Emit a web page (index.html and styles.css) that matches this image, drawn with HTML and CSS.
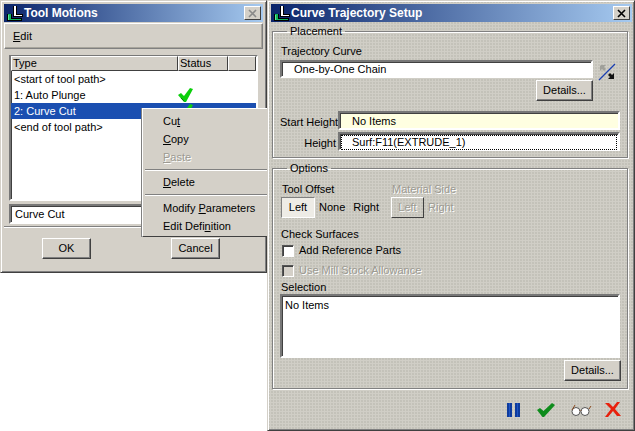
FILE: index.html
```html
<!DOCTYPE html>
<html lang="en">
<head>
<meta charset="utf-8">
<title>Tool Motions</title>
<link rel="stylesheet" href="styles.css">
</head>
<body>
<svg class="defs" width="0" height="0" aria-hidden="true">
  <symbol id="logo" viewBox="0 0 16 15">
    <path d="M0 8h5v4h10v3H0z" fill="#000"/>
    <path d="M1 8h3v5h10v1H1z" fill="#12b45c"/>
    <path d="M1 9h1v5H1z" fill="#5fe89a"/>
    <path d="M6 0h4v8h6v3H6z" fill="#000"/>
    <path d="M7 0h2v9h6v1H7z" fill="#fff"/>
  </symbol>
</svg>

<section class="window left-window">
  <header class="titlebar">
    <svg class="logo"><use href="#logo"/></svg>
    <span class="title">Tool Motions</span>
    <span class="close close-off"><svg viewBox="0 0 9 9"><path d="M1 1l7 7M8 1L1 8" stroke="#8a8a8a" stroke-width="1.6"/></svg></span>
  </header>
  <nav class="menubar"><span><u>E</u>dit</span></nav>
  <div class="left-body">
    <div class="list sunken">
      <div class="list-head">
        <span class="hcell h-type">Type</span><span class="hcell h-status">Status</span><span class="hcell h-blank"></span>
      </div>
      <div class="row"><span class="cell-type">&lt;start of tool path&gt;</span></div>
      <div class="row"><span class="cell-type">1: Auto Plunge</span>
        <svg class="tick" viewBox="0 0 15 14"><path d="M0 7l3-2 3 3 6-8 3 1-7 13H6z" fill="#0ccf0c"/><path d="M3 10l3 3" stroke="#087c08" fill="none"/></svg></div>
      <div class="row selected"><span class="cell-type">2: Curve Cut</span>
        <svg class="tick" viewBox="0 0 15 14"><path d="M0 7l3-2 3 3 6-8 3 1-7 13H6z" fill="#0ccf0c"/></svg></div>
      <div class="row"><span class="cell-type">&lt;end of tool path&gt;</span></div>
    </div>
    <div class="name-field sunken">Curve Cut</div>
  </div>
  <div class="left-foot">
    <button class="btn foot-btn">OK</button>
    <button class="btn foot-btn">Cancel</button>
  </div>
</section>

<div class="context-menu">
  <div class="mi">Cu<u>t</u></div>
  <div class="mi"><u>C</u>opy</div>
  <div class="mi disabled"><u>P</u>aste</div>
  <hr class="msep">
  <div class="mi"><u>D</u>elete</div>
  <hr class="msep msep-b">
  <div class="mi">Modify <u>P</u>arameters</div>
  <div class="mi">Edit Defi<u>n</u>ition</div>
</div>

<section class="window right-window">
  <header class="titlebar">
    <svg class="logo"><use href="#logo"/></svg>
    <span class="title">Curve Trajectory Setup</span>
    <span class="close"><svg viewBox="0 0 9 9"><path d="M1 1l7 7M8 1L1 8" stroke="#000" stroke-width="1.6"/></svg></span>
  </header>
  <div class="right-body">
    <fieldset class="group placement">
      <legend>Placement</legend>
      <div class="label traj-label">Trajectory Curve</div>
      <div class="traj-row">
        <div class="field traj-field sunken">One-by-One Chain</div>
        <svg class="flip" viewBox="0 0 18 18">
          <path d="M3 2h5L6 4l2 2-2 2-2-2-2 2V3z" fill="#a0a09a"/>
          <path d="M17 1L1 17" stroke="#1a3fb0" stroke-width="1.3"/>
          <path d="M16 16h-6l2-2-2-2 2-2 2 2 2-2z" fill="#111"/>
        </svg>
      </div>
      <div class="details-row traj-details"><button class="btn details">Details...</button></div>
      <div class="ref-grid">
        <span class="ref-label">Start Height</span><div class="field ref-field yellow sunken">No Items</div>
        <span class="ref-label">Height</span><div class="field ref-field sunken"><span class="focus">Surf:F11(EXTRUDE_1)</span></div>
      </div>
    </fieldset>
    <fieldset class="group options">
      <legend>Options</legend>
      <div class="seg-row">
        <div class="seg-block">
          <div class="label">Tool Offset</div>
          <div class="seg">
            <span class="seg-on">Left</span><span class="seg-none">None</span><span class="seg-right">Right</span>
          </div>
        </div>
        <div class="seg-block material">
          <div class="label disabled">Material Side</div>
          <div class="seg">
            <span class="seg-raised disabled">Left</span><span class="seg-right2 disabled">Right</span>
          </div>
        </div>
      </div>
      <div class="label check-title">Check Surfaces</div>
      <label class="check"><span class="box"></span>Add Reference Parts</label>
      <label class="check disabled"><span class="box box-off"></span>Use Mill Stock Allowance</label>
      <div class="label sel-label">Selection</div>
      <div class="sel-box sunken">No Items</div>
      <div class="details-row sel-details"><button class="btn details">Details...</button></div>
    </fieldset>
    <div class="actions">
      <svg class="a-pause" viewBox="0 0 13 14"><path d="M0 0h5v14H0zM8 0h5v14H8z" fill="#0f3c9e"/><path d="M2 0h1v14H2zM10 0h1v14h-1z" fill="#1f55c4"/></svg>
      <svg class="a-ok" viewBox="0 0 18 14"><path d="M0 7l3-2 3.500 3L15 0l3 2L7 14h-1.500z" fill="#0e8c1c"/></svg>
      <svg class="a-glass" viewBox="0 0 21 12"><circle cx="5" cy="7.500" r="4" fill="#fff" stroke="#555"/><circle cx="14" cy="7.500" r="4" fill="#fff" stroke="#555"/><path d="M9 6.500q.5-1 1 0M1 6L4 1M18 5l2-3" stroke="#8a4a20" fill="none"/></svg>
      <svg class="a-x" viewBox="0 0 16 15"><path d="M0 1h4l4 4 4-5h3l-5 7 6 7h-4l-4-5-5 6H0l6-8z" fill="#e8200c"/></svg>
    </div>
  </div>
</section>
</body>
</html>
```

FILE: styles.css
```css
* { box-sizing: border-box; }
html, body { margin: 0; padding: 0; }
body {
  width: 635px; height: 431px; overflow: hidden; position: relative;
  background: #fff;
  font: 11px/13px "Liberation Sans", sans-serif;
  color: #000;
}
.defs { position: absolute; }
u { text-decoration: underline; }
.disabled { color: #9c9a92; text-shadow: 1px 1px 0 #fff; }

.window {
  position: absolute; top: 0;
  display: flex; flex-direction: column;
  background: #d4d0c8;
  border: 1px solid;
  border-color: #d4d0c8 #404040 #404040 #d4d0c8;
  box-shadow: inset 1px 1px 0 #fff, inset -1px -1px 0 #808080;
  padding: 3px;
}
.left-window { left: 0; width: 267px; height: 273px; }
.right-window { left: 267px; width: 368px; height: 431px; padding: 3px 2px 3px 3px;
  background-color: #d0cec6;
  background-image: radial-gradient(circle at 1px 1px, #bdbbb2 .6px, transparent .9px);
  background-size: 3px 3px; }

.titlebar {
  height: 18px; flex: none; display: flex; align-items: center;
  background: linear-gradient(90deg, #0a246a, #a6caf0);
  color: #fff; padding: 0 2px 0 3px;
}
.logo { width: 16px; height: 15px; flex: none; }
.title { margin-left: 1px; font: bold 12px/16px "Liberation Sans", sans-serif; }
.close {
  margin-left: auto; width: 17px; height: 14px;
  background: #d4d0c8;
  border: 1px solid; border-color: #fff #404040 #404040 #fff;
  display: flex; align-items: center; justify-content: center;
}
.close svg { width: 9px; height: 9px; }

.menubar {
  height: 26px; flex: none; margin-top: 1px;
  border: 1px solid; border-color: #fff #808080 #808080 #fff;
  box-shadow: inset -1px -1px 0 #a8a59c;
  padding: 6px 8px; 
}

.sunken {
  border: 2px solid;
  border-color: #777 #fff #fff #777;
  box-shadow: inset 1px 1px 0 #404040;
}
.left-body { padding: 6px 5px 0; flex: none; }
.list { height: 146px; background: #fff; padding: 0; }
.list-head { display: flex; height: 15px; margin-top: -1px; }
.hcell {
  background: #d4d0c8; border: 1px solid; border-color: #fff #404040 #404040 #fff;
  padding: 0 1px; line-height: 13px;
}
.h-type { width: 167px; }
.h-status { width: 50px; }
.h-blank { flex: 1; }
.row { height: 16px; display: flex; align-items: center; position: relative; padding-left: 3px; }
.selected {
  background-color: #2b62c4; color: #fff;
  background-image: radial-gradient(circle at 1px 1px, #1a4fb0 .7px, transparent 1px);
  background-size: 2px 2px;
}
.tick { position: absolute; left: 167px; top: 1px; width: 15px; height: 14px; }
.name-field { height: 20px; margin-top: 3px; background: #fff; padding: 2px 4px; }

.left-foot {
  flex: 1; margin: 2px 0 0; border-top: 1px solid #808080;
  box-shadow: inset 0 1px 0 #fff;
  display: flex; padding: 11px 38px 0 38px; justify-content: space-between; margin-right: 5px; align-items: flex-start;
}
.btn {
  font: inherit; color: #000; background: #d4d0c8; padding: 0;
  border: 1px solid; border-color: #fff #404040 #404040 #fff;
  box-shadow: inset -1px -1px 0 #808080;
}
.foot-btn { width: 49px; height: 21px; }

.context-menu {
  position: absolute; left: 142px; top: 108px; width: 140px; height: 129px;
  background: #d4d0c8; padding: 3px 0;
  border: 1px solid; border-color: #fff #404040 #404040 #fff;
  box-shadow: -1px 0 0 #808080;
  display: flex; flex-direction: column;
}
.mi { height: 18px; line-height: 18px; padding-left: 20px; flex: none; }
.msep { margin: 3px 2px 2px; flex: none; height: 2px; border: 0; border-top: 1px solid #808080; border-bottom: 1px solid #fff; width: 123px; }
.msep-b { margin-bottom: 3px; }

.right-body { flex: 1; display: flex; flex-direction: column; padding: 3px 4px 0 1px; }
.group {
  margin: 0; padding: 0 7px; min-width: 0;
  border: 1px solid #808080;
  box-shadow: 1px 1px 0 #fff, inset 1px 1px 0 #fff;
}
.group legend { margin-left: 7px; padding: 0 3px; line-height: 13px; }
.placement { height: 133px; flex: none; }
.options { height: 227px; margin-top: 4px; flex: none; }
.label { line-height: 13px; white-space: nowrap; }
.traj-label { margin-top: 7px; padding-left: 1px; }
.traj-row { display: flex; align-items: flex-start; margin-top: 2px; height: 18px; }
.field { background: #fff; line-height: 13px; }
.traj-field { width: 313px; height: 18px; padding: 1px 12px; }
.flip { width: 18px; height: 18px; margin: 3px 0 0 5px; flex: none; }
.details-row { display: flex; justify-content: flex-end; }
.traj-details { width: 313px; margin-top: 2px; }
.details { width: 57px; height: 21px; }
.ref-grid { display: grid; grid-template-columns: 56px 282px; column-gap: 2px; row-gap: 2px; margin-top: 10px; }
.ref-label { text-align: right; align-self: end; padding-bottom: 1px; white-space: nowrap; }
.ref-field { height: 19px; padding: 2px 12px; }
.ref-field:last-child { padding: 1px; }
.yellow { background: #ffffe1; }
.focus { display: block; border: 1px dotted #000; padding: 0 10px; line-height: 13px; width: 100%; height: 15px; }

.seg-row { display: flex; margin-top: 8px; padding-left: 1px; }
.seg-block { width: 110px; padding-left: 1px; }
.seg { display: flex; align-items: center; margin-top: 1px; height: 21px; margin-left: -1px; }
.seg-on {
  width: 34px; height: 21px; flex: none; text-align: center; line-height: 19px;
  border: 1px solid; border-color: #808080 #fff #fff #808080;
  background: #eeece6;
}
.seg-none { margin-left: 4px; }
.seg-right { margin-left: 8px; }
.seg-raised {
  width: 33px; height: 21px; flex: none; text-align: center; line-height: 19px;
  border: 1px solid; border-color: #fff #404040 #404040 #fff;
}
.seg-right2 { margin-left: 4px; }
.check-title { margin-top: 10px; padding-left: 1px; }
.check { display: flex; align-items: center; height: 13px; margin-top: 3px; padding-left: 2px; gap: 5px; }
.check + .check { margin-top: 7px; }
.box { width: 12px; height: 12px; background: #fff; flex: none; border: 1px solid; border-color: #555 #fff #fff #555; box-shadow: inset 1px 1px 0 #404040; }
.box-off { background: #d4d0c8; }
.sel-label { margin-top: 4px; padding-left: 1px; }
.sel-box { height: 64px; width: 340px; background: #fff; margin-top: 0; padding: 3px 3px; }
.sel-details { width: 341px; margin-top: 2px; }

.actions { display: flex; align-items: center; height: 41px; justify-content: flex-end; padding-right: 7px; }
.a-pause { width: 13px; height: 14px; margin-right: 17px; }
.a-ok { width: 18px; height: 14px; margin-right: 16px; }
.a-glass { width: 21px; height: 12px; margin-right: 13px; }
.a-x { width: 16px; height: 15px; }
```
